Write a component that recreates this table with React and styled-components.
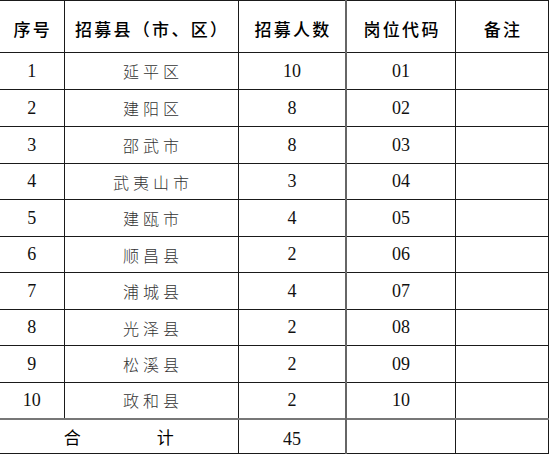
import React from "react";
import styled, { createGlobalStyle } from "styled-components";

const GlobalStyle = createGlobalStyle`
  html, body {
    margin: 0;
    padding: 0;
    background: #ffffff;
  }
  body {
    font-family: "Liberation Serif", "Noto Sans CJK SC", serif;
  }
`;

const rows = [
  ["1", "延平区", "10", "01"],
  ["2", "建阳区", "8", "02"],
  ["3", "邵武市", "8", "03"],
  ["4", "武夷山市", "3", "04"],
  ["5", "建瓯市", "4", "05"],
  ["6", "顺昌县", "2", "06"],
  ["7", "浦城县", "4", "07"],
  ["8", "光泽县", "2", "08"],
  ["9", "松溪县", "2", "09"],
  ["10", "政和县", "2", "10"]
];

const rowHeights = [37, 37, 37, 36, 37, 36, 37, 36, 37, 36];

export default function App() {
  return (
    <>
      <GlobalStyle />
      <Sheet>
        <colgroup>
          <col style={{ width: 64 }} />
          <col style={{ width: 174 }} />
          <col style={{ width: 108 }} />
          <col style={{ width: 109 }} />
          <col style={{ width: 93 }} />
        </colgroup>
        <thead>
          <HeadRow>
            <HeadCell>序号</HeadCell>
            <HeadCell>招募县（市、区）</HeadCell>
            <HeadCell $divider>招募人数</HeadCell>
            <HeadCell>岗位代码</HeadCell>
            <HeadCell>备注</HeadCell>
          </HeadRow>
        </thead>
        <tbody>
          {rows.map(([no, county, count, code], i) => (
            <BodyRow key={no} $h={rowHeights[i]}>
              <NumCell>{no}</NumCell>
              <NameCell>
                <Spaced>{county}</Spaced>
              </NameCell>
              <NumCell $divider>{count}</NumCell>
              <NumCell>{code}</NumCell>
              <NumCell />
            </BodyRow>
          ))}
          <TotalRow>
            <TotalLabel colSpan={2}>
              <LabelPair>
                <span>合</span>
                <span>计</span>
              </LabelPair>
            </TotalLabel>
            <TotalNum $divider>45</TotalNum>
            <TotalNum />
            <TotalNum />
          </TotalRow>
        </tbody>
      </Sheet>
    </>
  );
}

const Sheet = styled.table`
  border-collapse: collapse;
  table-layout: fixed;
  width: 549px;
  color: #111;

  td, th {
    border: 1px solid #1a1a1a;
    padding: 0;
    text-align: center;
    vertical-align: middle;
  }

  tr > *:first-child {
    border-left: none;
  }

  tbody tr {
    border-top: 1px solid #444;
  }
`;

const HeadRow = styled.tr`
  height: 52px;
`;

const HeadCell = styled.th`
  font-family: "Noto Sans CJK SC", sans-serif;
  font-size: 17px;
  font-weight: 500;
  letter-spacing: 2.3px;
  padding-top: 4px !important;
  padding-left: 2px !important;
  color: #000;
  ${(p) => p.$divider && "border-right: 2px solid #666 !important;"}
`;

const BodyRow = styled.tr`
  height: ${(p) => p.$h}px;
`;

const NumCell = styled.td`
  font-family: "Liberation Serif", serif;
  font-size: 18px;
  color: #111;
  ${(p) => p.$divider && "border-right: 2px solid #666 !important;"}
`;

const NameCell = styled.td`
  font-family: "Noto Sans CJK SC", sans-serif;
  font-size: 16px;
  font-weight: 300;
  color: #333;
`;

const Spaced = styled.span`
  letter-spacing: 4px;
  padding-left: 4px;
`;

const TotalRow = styled.tr`
  height: 35px;
  border-top: 2px solid #777 !important;
`;

const TotalLabel = styled.td`
  font-family: "Noto Sans CJK SC", sans-serif;
  font-size: 17px;
  font-weight: 400;
  color: #000;
`;

const LabelPair = styled.div`
  display: flex;
  justify-content: center;
  gap: 76px;
`;

const TotalNum = styled.td`
  font-family: "Liberation Serif", serif;
  font-size: 18px;
  padding-top: 6px !important;
  color: #111;
  ${(p) => p.$divider && "border-right: 2px solid #666 !important;"}
`;
